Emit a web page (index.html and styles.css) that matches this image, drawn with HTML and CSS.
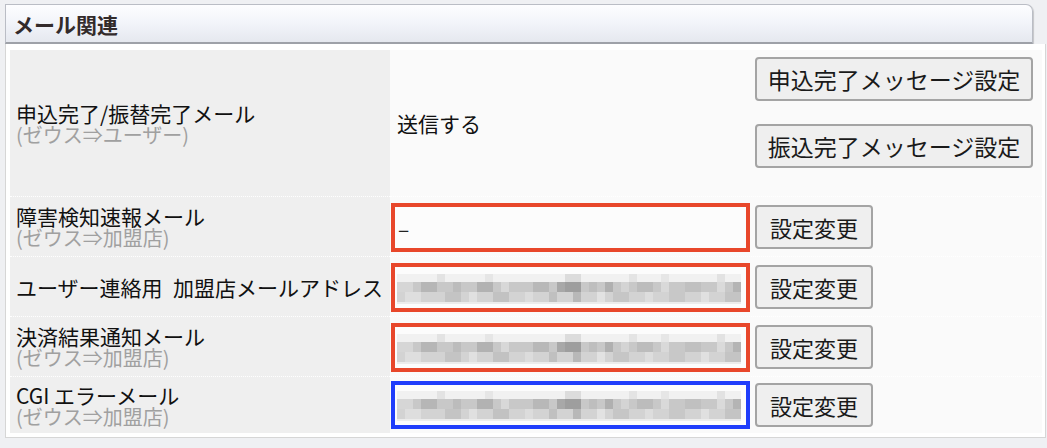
FILE: index.html
```html
<!DOCTYPE html>
<html lang="ja">
<head>
<meta charset="utf-8">
<title>メール関連</title>
<link rel="stylesheet" href="styles.css">
</head>
<body>
<svg class="defs" width="0" height="0" aria-hidden="true">
  <symbol id="mosaic" viewBox="0 0 344 30">
    <rect x="0" y="0" width="344" height="8" fill="#f1f1f1"/>
    <rect x="40" y="0" width="8" height="8" fill="#e3e3e3"/>
    <rect x="88" y="0" width="8" height="8" fill="#e6e6e6"/>
    <rect x="168" y="0" width="16" height="8" fill="#dcdcdc"/>
    <rect x="232" y="0" width="8" height="8" fill="#e4e4e4"/>
    <rect x="264" y="0" width="8" height="8" fill="#e6e6e6"/>
    <rect x="320" y="0" width="8" height="8" fill="#e2e2e2"/>
    <rect x="0" y="8" width="344" height="10" fill="#c8c8c8"/>
    <rect x="0" y="8" width="16" height="10" fill="#d6d6d6"/>
    <rect x="24" y="8" width="16" height="10" fill="#b6b6b6"/>
    <rect x="56" y="8" width="8" height="10" fill="#bcbcbc"/>
    <rect x="80" y="8" width="16" height="10" fill="#b2b2b2"/>
    <rect x="104" y="8" width="8" height="10" fill="#d8d8d8"/>
    <rect x="136" y="8" width="16" height="10" fill="#b8b8b8"/>
    <rect x="160" y="8" width="8" height="10" fill="#a8a8a8"/>
    <rect x="168" y="8" width="16" height="10" fill="#9e9e9e"/>
    <rect x="192" y="8" width="8" height="10" fill="#bebebe"/>
    <rect x="208" y="8" width="8" height="10" fill="#b0b0b0"/>
    <rect x="224" y="8" width="8" height="10" fill="#d4d4d4"/>
    <rect x="240" y="8" width="16" height="10" fill="#bcbcbc"/>
    <rect x="264" y="8" width="8" height="10" fill="#d9d9d9"/>
    <rect x="288" y="8" width="16" height="10" fill="#c0c0c0"/>
    <rect x="320" y="8" width="8" height="10" fill="#dadada"/>
    <rect x="336" y="8" width="8" height="10" fill="#b4b4b4"/>
    <rect x="0" y="18" width="344" height="10" fill="#d3d3d3"/>
    <rect x="8" y="18" width="16" height="10" fill="#dedede"/>
    <rect x="48" y="18" width="16" height="10" fill="#c4c4c4"/>
    <rect x="72" y="18" width="8" height="10" fill="#e0e0e0"/>
    <rect x="96" y="18" width="16" height="10" fill="#c2c2c2"/>
    <rect x="128" y="18" width="8" height="10" fill="#dcdcdc"/>
    <rect x="152" y="18" width="8" height="10" fill="#c0c0c0"/>
    <rect x="176" y="18" width="8" height="10" fill="#b8b8b8"/>
    <rect x="200" y="18" width="8" height="10" fill="#e2e2e2"/>
    <rect x="216" y="18" width="16" height="10" fill="#c6c6c6"/>
    <rect x="248" y="18" width="8" height="10" fill="#dddddd"/>
    <rect x="272" y="18" width="16" height="10" fill="#c8c8c8"/>
    <rect x="304" y="18" width="8" height="10" fill="#e0e0e0"/>
    <rect x="328" y="18" width="16" height="10" fill="#c4c4c4"/>
    <rect x="0" y="28" width="344" height="2" fill="#ececec"/>
  </symbol>
</svg>

<div class="section">
  <div class="section-head">メール関連</div>
  <div class="section-body">
    <div class="row row-first">
      <div class="lbl">
        <div class="lbl-main">申込完了/振替完了メール</div>
        <div class="lbl-sub">(ゼウス⇒ユーザー)</div>
      </div>
      <div class="val val-first">
        <div class="status">送信する</div>
        <div class="btn-stack">
          <button class="btn btn-wide" type="button">申込完了メッセージ設定</button>
          <button class="btn btn-wide" type="button">振込完了メッセージ設定</button>
        </div>
      </div>
    </div>

    <div class="row">
      <div class="lbl">
        <div class="lbl-main">障害検知速報メール</div>
        <div class="lbl-sub">(ゼウス⇒加盟店)</div>
      </div>
      <div class="val">
        <div class="field field-red"><span class="dash">–</span></div>
        <button class="btn" type="button">設定変更</button>
      </div>
    </div>

    <div class="row">
      <div class="lbl">
        <div class="lbl-main">ユーザー連絡用&ensp;加盟店メールアドレス</div>
      </div>
      <div class="val">
        <div class="field field-red"><svg class="mosaic" width="344" height="30"><use href="#mosaic"/></svg></div>
        <button class="btn" type="button">設定変更</button>
      </div>
    </div>

    <div class="row">
      <div class="lbl">
        <div class="lbl-main">決済結果通知メール</div>
        <div class="lbl-sub">(ゼウス⇒加盟店)</div>
      </div>
      <div class="val">
        <div class="field field-red"><svg class="mosaic" width="344" height="30"><use href="#mosaic"/></svg></div>
        <button class="btn" type="button">設定変更</button>
      </div>
    </div>

    <div class="row row-last">
      <div class="lbl">
        <div class="lbl-main">CGI エラーメール</div>
        <div class="lbl-sub">(ゼウス⇒加盟店)</div>
      </div>
      <div class="val">
        <div class="field field-blue"><svg class="mosaic" width="344" height="30"><use href="#mosaic"/></svg></div>
        <button class="btn" type="button">設定変更</button>
      </div>
    </div>
  </div>
</div>
</body>
</html>
```

FILE: styles.css
```css
html, body {
  margin: 0;
  padding: 0;
}
body {
  background: #eff0f3;
  font-family: "Noto Sans CJK JP", "Noto Sans", sans-serif;
  color: #111;
  width: 1047px;
  height: 448px;
  overflow: hidden;
}
.defs {
  position: absolute;
  width: 0;
  height: 0;
}
.section {
  margin: 4px 0 0 5px;
  width: 1041px;
}
.section-head {
  box-sizing: border-box;
  width: 1028px;
  height: 40px;
  border: 1px solid #babdc5;
  border-bottom: 2px solid #9ea1a8;
  border-radius: 0 7px 0 0;
  background: linear-gradient(#fdfdff 0%, #f3f5fa 45%, #e5e8ef 100%);
  box-shadow: 1px 1px 1px rgba(0, 0, 0, 0.18);
  padding-left: 7px;
  font-size: 21px;
  font-weight: bold;
  line-height: 38px;
  color: #332b2b;
}
.section-body {
  box-sizing: border-box;
  width: 1041px;
  background: #fff;
  border: 1px solid #d6d6d6;
  border-top: none;
  padding: 6px 3px 4px 4px;
}
.row {
  display: grid;
  grid-template-columns: 380px 1fr;
  height: 60px;
}
.row-first {
  height: 147px;
}
.row-last {
  height: 56px;
}
.lbl, .val {
  box-sizing: border-box;
  border-bottom: 1px dotted #fff;
}
.row-last .lbl, .row-last .val {
  border-bottom: none;
}
.lbl {
  background: #efefef;
  padding-left: 6px;
  display: flex;
  flex-direction: column;
  justify-content: center;
  font-size: 21px;
  line-height: 22px;
}
.lbl-main {
  color: #111;
  white-space: nowrap;
}
.lbl-sub {
  color: #a0a0a0;
  font-size: 20px;
  line-height: 21px;
}
.val {
  background: #fafafa;
  display: flex;
  align-items: center;
  padding-left: 1px;
}
.val-first {
  align-items: flex-start;
  padding-left: 0;
}
.status {
  width: 365px;
  align-self: center;
  box-sizing: border-box;
  padding-left: 7px;
  font-size: 21px;
  line-height: 24px;
}
.btn-stack {
  display: flex;
  flex-direction: column;
  gap: 23px;
  padding-top: 7px;
}
.btn {
  box-sizing: border-box;
  width: 118px;
  height: 44px;
  padding: 0;
  margin: 0;
  border: 2px solid #a4a4a4;
  border-radius: 4px;
  background: #efefef;
  font-family: "Noto Sans CJK JP", "Noto Sans", sans-serif;
  font-size: 22px;
  line-height: 40px;
  color: #1a1a1a;
  text-align: center;
}
.btn-wide {
  width: 278px;
  height: 44px;
  font-size: 23px;
}
.field {
  box-sizing: border-box;
  width: 359px;
  height: 49px;
  margin-right: 5px;
  border: 4px solid #e8472b;
  background: #fcfcfc;
  display: flex;
  align-items: center;
  padding-left: 2px;
  margin-top: 2px;
}
.field-blue {
  border-color: #1f3dfb;
  height: 48px;
  margin-top: 0;
}
.dash {
  font-size: 21px;
  color: #222;
  padding-left: 1px;
  line-height: 22px;
}
.mosaic {
  display: block;
  margin-top: 2px;
}
```
